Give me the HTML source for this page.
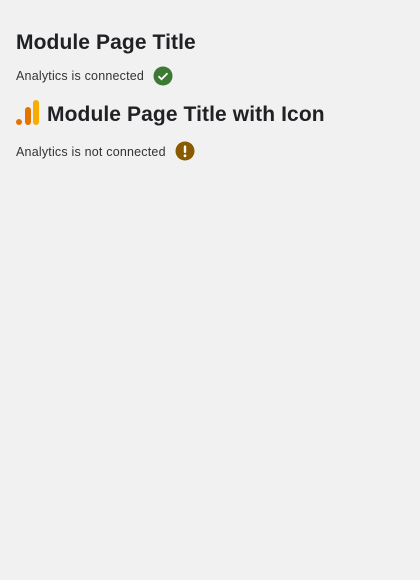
<!DOCTYPE html>
<html><head><style>
body{margin:0;width:420px;height:580px;background:#f1f1f1;font-family:"Liberation Sans",sans-serif;color:#202124;position:relative;overflow:hidden}
.t{position:absolute;left:16px;font-size:21px;font-weight:bold;line-height:26px;white-space:nowrap;letter-spacing:0.1px}
.s{position:absolute;left:16px;font-size:12.5px;line-height:16px;white-space:nowrap;color:#333;letter-spacing:0.2px}
svg{position:absolute}
</style></head><body>
<div class="t" style="top:30px">Module Page Title</div>
<div class="s" style="top:68px">Analytics is connected</div>
<svg style="left:153px;top:66px" width="20" height="20" viewBox="0 0 20 20"><circle cx="10" cy="10" r="9.5" fill="#3c7a33"/><path d="M5.5 10.2l3 3 6-6" stroke="#fff" stroke-width="1.8" fill="none"/></svg>
<svg style="left:16px;top:100px" width="24" height="26" viewBox="0 0 24 26"><rect x="17" y="0" width="6" height="25" rx="3" fill="#f9ab00"/><rect x="9" y="7" width="6" height="18" rx="3" fill="#e37400"/><circle cx="3" cy="22" r="3" fill="#e37400"/></svg>
<div class="t" style="left:47px;top:102px">Module Page Title with Icon</div>
<div class="s" style="top:144px">Analytics is not connected</div>
<svg style="left:175px;top:141px" width="20" height="20" viewBox="0 0 20 20"><circle cx="10" cy="10" r="9.5" fill="#8a5a00"/><rect x="8.8" y="4.5" width="2.4" height="7.5" rx="1" fill="#fff"/><circle cx="10" cy="14.8" r="1.4" fill="#fff"/></svg>
</body></html>
